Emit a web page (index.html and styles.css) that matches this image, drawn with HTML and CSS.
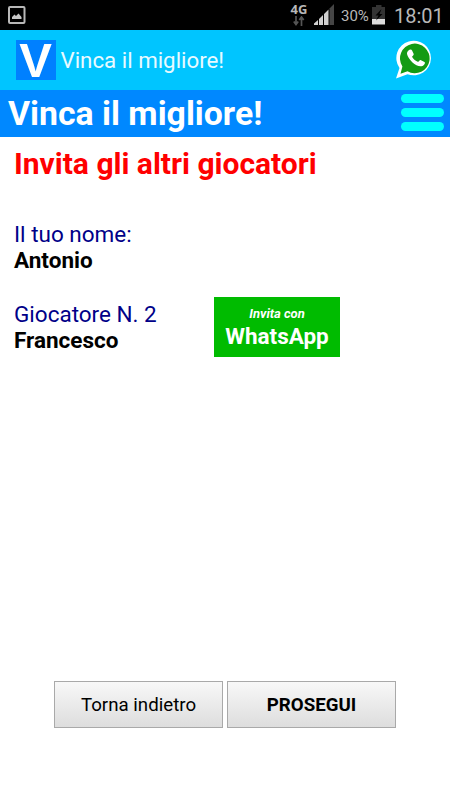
FILE: index.html
```html
<!DOCTYPE html>
<html lang="it">
<head>
    <meta charset="UTF-8">
    <meta name="viewport" content="width=device-width, initial-scale=1.0">
    <title>Vinca il migliore!</title>
    <link rel="stylesheet" href="styles.css">
</head>
<body>
    <div class="statusbar">
        <svg class="picture" width="18" height="18" viewBox="0 0 18 18">
            <rect x="1" y="1" width="15.5" height="16" rx="1" fill="none" stroke="#b8b8b8" stroke-width="2"/>
            <path d="M4 13V11L6.5 8.5L8 10L10.5 7.5L13.5 11V13Z" fill="#c8c8c8"/>
        </svg>
        <div class="network">
            <span>4G</span>
            <svg width="12" height="10" viewBox="0 0 12 10">
                <path d="M3 0V8M0.8 5.5L3 8.5L5.2 5.5M8.5 10V2M6.3 4L8.5 1L10.7 4" fill="none" stroke="#555" stroke-width="1.7"/>
            </svg>
        </div>
        <svg class="signal" width="22" height="21" viewBox="0 0 22 21">
            <path d="M0 21V19.5L4 16V21ZM5 21V15L9 11V21ZM10 21V10L14.5 5.5V21Z" fill="#d0d0d0"/>
            <path d="M15.5 21V4.5L20 0V21Z" fill="#454545"/>
        </svg>
        <span class="percent">30%</span>
        <svg class="battery" width="14" height="20" viewBox="0 0 14 20">
            <path d="M4 0H9.5V2H13V19H0V2H4Z" fill="#333"/>
            <path d="M0 14H13V19.5H0Z" fill="#ddd"/>
            <path d="M9.5 4L3.5 10.5H6.5L4 15.5L10.5 9H7.5Z" fill="#000"/>
        </svg>
        <span class="clock">18:01</span>
    </div>
    <div class="appbar">
        <div class="logo">V</div>
        <span class="appname">Vinca il migliore!</span>
        <svg class="whatsapp" width="38" height="40" viewBox="0 0 38 40">
            <path d="M0 38.5L3.5 28A17.3 17.3 0 1 1 11.5 34.2Z" fill="#fff"/>
            <path d="M4.5 33.8L6.4 26.5A14.8 14.8 0 1 1 11.5 31.3Z" fill="#149b14"/>
            <path d="M12.2 10.7C14 9 15.5 9.2 16.2 10.7L17.7 14C18 15 16.5 16 16 16.8C17.5 19.3 19.5 21 22.2 22C23 21 24 19.7 25 20.2L28.5 22C29.8 23 28 25.3 26.4 26C23.5 27.2 19.5 25 16.5 22.5C13.5 19.5 10.8 15.5 11 13C11.2 12 11.6 11.3 12.2 10.7Z" fill="#fff"/>
        </svg>
    </div>
    <div class="header">
        <h1>Vinca il migliore!</h1>
        <div class="menu">
            <div class="line"></div>
            <div class="line"></div>
            <div class="line"></div>
        </div>
    </div>
    <div class="content">
        <h2>Invita gli altri giocatori</h2>
        <div class="player">
            <div>
                <div class="label">Il tuo nome:</div>
                <div class="name">Antonio</div>
            </div>
        </div>
        <div class="player">
            <div class="info">
                <div class="label">Giocatore N. 2</div>
                <div class="name">Francesco</div>
            </div>
            <button class="invite"><i>Invita con</i><b>WhatsApp</b></button>
        </div>
    </div>
    <div class="buttons">
        <button class="button">Torna indietro</button>
        <button class="button next">PROSEGUI</button>
    </div>
</body>
</html>
```
FILE: styles.css
```css
* {
    box-sizing: border-box;
}
body {
    display: flex;
    flex-direction: column;
    height: 100vh;
    margin: 0;
    background-color: #fff;
    font-family: Roboto, "Liberation Sans", sans-serif;
    white-space: nowrap;
}
.statusbar {
    display: flex;
    align-items: flex-start;
    height: 30px;
    background-color: #000;
    color: #b8b8b8;
}
.picture {
    margin: 6px auto 0 8px;
}
.network {
    display: flex;
    flex-direction: column;
    align-items: center;
    width: 18px;
    margin-top: 3px;
    font-family: "Open Sans", sans-serif;
    font-size: 13px;
    font-weight: bold;
    line-height: 13px;
}
.signal {
    margin: 4px 0 0 6px;
}
.percent {
    width: 28px;
    margin: 6px 0 0 5px;
    font-size: 15px;
    line-height: 20px;
}
.battery {
    margin: 5px 0 0 3px;
}
.clock {
    width: 50px;
    margin: 4px 6px 0 8px;
    font-size: 20px;
    line-height: 24px;
}
.appbar {
    display: flex;
    align-items: center;
    height: 60px;
    padding: 0 16px 0 15px;
    background-color: #00c5ff;
}
.logo {
    width: 40px;
    height: 40px;
    margin-left: 0.5px;
    background-color: #0080ff;
    color: #fff;
    font-family: "Liberation Sans", sans-serif;
    font-size: 49px;
    font-weight: bold;
    line-height: 40px;
    text-align: center;
}
.appname {
    margin-left: 5px;
    color: #e8faff;
    font-size: 22.3px;
}
.whatsapp {
    margin-left: auto;
}
.header {
    display: flex;
    justify-content: space-between;
    height: 47px;
    padding: 0 6px 0 8px;
    background-color: #0088ff;
}
h1 {
    margin: 0;
    color: #fff;
    font-size: 33.8px;
    line-height: 47px;
}
.menu {
    display: flex;
    flex-direction: column;
    gap: 5px;
    padding-top: 4px;
}
.line {
    width: 43px;
    height: 9px;
    border-radius: 5px;
    background-color: #00ffff;
}
.content {
    padding: 10px 14px;
}
h2 {
    margin: 0 0 40px;
    color: #ff0000;
    font-size: 30px;
    line-height: 34px;
}
.player {
    display: flex;
    align-items: flex-start;
    height: 79px;
    font-size: 22.5px;
    line-height: 26px;
}
.info {
    width: 200px;
    padding-top: 1px;
}
.label {
    color: #000088;
}
.name {
    font-weight: bold;
}
.invite {
    display: flex;
    flex-direction: column;
    align-items: center;
    width: 126px;
    height: 60px;
    margin-top: -3px;
    padding: 9px 0 0;
    border: none;
    background-color: #00bb00;
    color: #fff;
    font-family: inherit;
    font-size: 22.5px;
    line-height: 26px;
}
.invite i {
    margin-bottom: 2px;
    font-size: 13px;
    font-weight: bold;
    line-height: 15px;
}
.buttons {
    display: flex;
    justify-content: center;
    gap: 4px;
    margin: auto 0 72px;
}
.button {
    width: 169px;
    height: 47px;
    padding: 0;
    border: 1px solid #a9a9a9;
    background: linear-gradient(#f8f8f8, #dddddd);
    color: #000;
    font-family: inherit;
    font-size: 18.7px;
}
.next {
    font-weight: bold;
}
```
